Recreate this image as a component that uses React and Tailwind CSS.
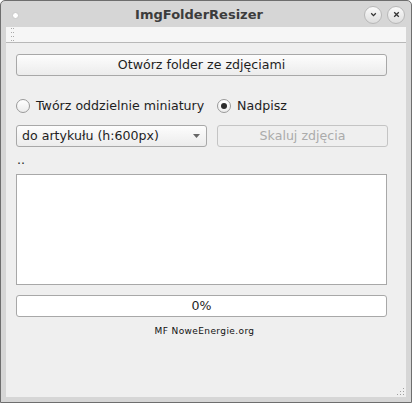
import { useState } from 'react'

const font = { fontFamily: '"DejaVu Sans", "Liberation Sans", sans-serif' }

const TitleButton = ({ children }) => (
  <div className="w-[18px] h-[18px] rounded-full border border-[#b8b8b8] bg-gradient-to-b from-[#fafafa] to-[#dedede] flex items-center justify-center">
    {children}
  </div>
)

const Radio = ({ checked, label, onClick }) => (
  <button onClick={onClick} className="flex items-center gap-[6px] text-[12.6px] text-[#1e1e1e]">
    <span className="w-[14px] h-[14px] rounded-full border border-[#9a9a9a] bg-gradient-to-b from-white to-[#ececec] flex items-center justify-center">
      {checked && <span className="w-[6px] h-[6px] rounded-full bg-[#2a2a2a]" />}
    </span>
    {label}
  </button>
)

export default function App() {
  const [overwrite, setOverwrite] = useState(true)

  return (
    <div className="w-[412px] h-[403px] bg-[#d6d6d6] border border-[#6e6e6e] rounded-t-[5px] flex flex-col overflow-hidden" style={font}>
      {/* Title bar */}
      <div className="h-[26px] flex items-center pl-[11px] pr-[6px]">
        <span className="w-[7px] h-[7px] rounded-full bg-white border border-[#c8c8c8] mt-[2px]" />
        <div className="flex-1 text-center font-bold text-[13px] text-[#3c3c3c] pl-[15px] mt-[1px]">ImgFolderResizer</div>
        <div className="flex gap-[5px] mt-[1px]">
          <TitleButton>
            <svg width="9" height="9" viewBox="0 0 9 9"><path d="M2.2 3.3 L4.5 5.6 L6.8 3.3" fill="none" stroke="#333" strokeWidth="1.3" /></svg>
          </TitleButton>
          <TitleButton>
            <svg width="9" height="9" viewBox="0 0 9 9"><path d="M2.2 2.2 L6.8 6.8 M6.8 2.2 L2.2 6.8" fill="none" stroke="#333" strokeWidth="1.3" /></svg>
          </TitleButton>
        </div>
      </div>

      <div className="flex-1 mx-[5px] mb-[5px] flex flex-col bg-[#efefef]">
        {/* Toolbar strip */}
        <div className="h-[16px] bg-[#f6f6f6] border-b border-[#b8b8b8] flex items-center pl-[5px]">
          <div className="w-[3px] h-[13px] flex flex-col justify-between">
            {[0, 1, 2, 3].map((i) => (
              <div key={i} className="flex justify-between">
                <span className="w-[1px] h-[1px] bg-[#aaa]" />
                <span className="w-[1px] h-[1px] bg-[#aaa]" />
              </div>
            ))}
          </div>
        </div>

        <div className="flex-1 flex flex-col px-[10px] pt-[11px] relative">
          <button className="w-[371px] h-[22px] rounded-[3px] border border-[#a8a8a8] bg-gradient-to-b from-[#fdfdfd] to-[#ececec] text-[12.6px] text-[#1e1e1e]">
            Otwórz folder ze zdjęciami
          </button>

          <div className="flex items-center mt-[21px] h-[18px]">
            <div className="w-[201px]">
              <Radio label="Twórz oddzielnie miniatury" checked={!overwrite} onClick={() => setOverwrite(false)} />
            </div>
            <Radio label="Nadpisz" checked={overwrite} onClick={() => setOverwrite(true)} />
          </div>

          <div className="flex gap-[10px] mt-[10px]">
            <div className="w-[191px] h-[22px] rounded-[3px] border border-[#a8a8a8] bg-gradient-to-b from-[#fdfdfd] to-[#ececec] flex items-center pl-[5px] pr-[6px] text-[12.6px] text-[#1e1e1e]">
              <span className="flex-1">do artykułu (h:600px)</span>
              <svg width="7" height="4" viewBox="0 0 7 4"><path d="M0 0 L7 0 L3.5 4 Z" fill="#666" /></svg>
            </div>
            <button disabled className="w-[171px] h-[22px] rounded-[3px] border border-[#c4c4c4] bg-[#efefef] text-[12.6px] text-[#ababab]">
              Skaluj zdjęcia
            </button>
          </div>

          <div className="text-[12.6px] text-[#1e1e1e] mt-[5px] h-[16px] pl-[1px] leading-[16px]">..</div>

          <div className="w-[371px] h-[111px] mt-[6px] bg-white border border-[#a8a8a8]" />

          <div className="w-[371px] h-[22px] mt-[10px] bg-white border border-[#a8a8a8] rounded-[3px] flex items-center justify-center text-[12.6px] text-[#1e1e1e]">
            0%
          </div>

          <div className="w-[371px] text-center text-[9px] tracking-[0.4px] text-[#111] mt-[8px] pl-[6px]">MF NoweEnergie.org</div>

          {/* Resize grip */}
          <div className="absolute right-[1px] bottom-[1px] w-[10px] h-[10px]">
            <svg width="10" height="10" viewBox="0 0 10 10">
              {[[8, 2], [8, 5], [5, 5], [8, 8], [5, 8], [2, 8]].map(([x, y], i) => (
                <rect key={i} x={x} y={y} width="1" height="1" fill="#a0a0a0" />
              ))}
            </svg>
          </div>
        </div>
      </div>
    </div>
  )
}
